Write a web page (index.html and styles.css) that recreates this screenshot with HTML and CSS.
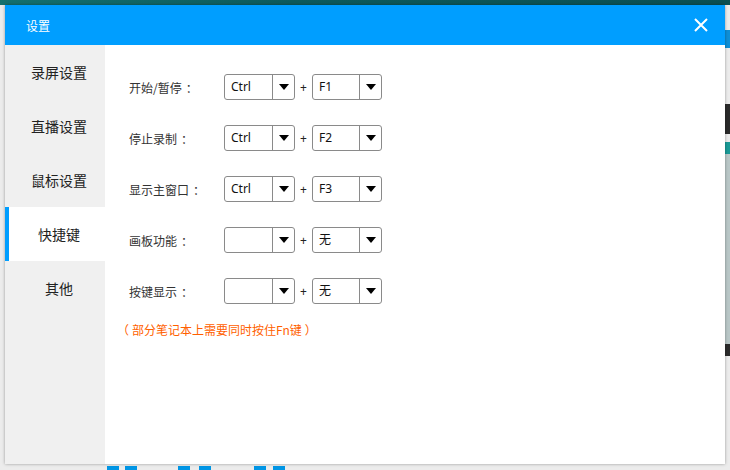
FILE: index.html
```html
<!DOCTYPE html>
<html lang="zh">
<head>
<meta charset="utf-8">
<title>设置</title>
<link rel="stylesheet" href="styles.css">
</head>
<body>
<div class="desk">
  <div class="dialog">
    <div class="header">
      <span class="title">设置</span>
      <svg class="close" width="14" height="14" viewBox="0 0 14 14"><path d="M1 1L13 13M13 1L1 13" stroke="#fff" stroke-width="2" fill="none"/></svg>
    </div>
    <div class="main">
      <ul class="menu">
        <li class="item">录屏设置</li>
        <li class="item">直播设置</li>
        <li class="item">鼠标设置</li>
        <li class="item active">快捷键</li>
        <li class="item">其他</li>
      </ul>
      <div class="content">
        <div class="row">
          <span class="label">开始/暂停<span class="colon">：</span></span>
          <div class="select"><span class="val">Ctrl</span><span class="btn"><i class="arrow"></i></span></div>
          <span class="plus">+</span>
          <div class="select"><span class="val">F1</span><span class="btn"><i class="arrow"></i></span></div>
        </div>
        <div class="row">
          <span class="label">停止录制<span class="colon">：</span></span>
          <div class="select"><span class="val">Ctrl</span><span class="btn"><i class="arrow"></i></span></div>
          <span class="plus">+</span>
          <div class="select"><span class="val">F2</span><span class="btn"><i class="arrow"></i></span></div>
        </div>
        <div class="row">
          <span class="label">显示主窗口<span class="colon">：</span></span>
          <div class="select"><span class="val">Ctrl</span><span class="btn"><i class="arrow"></i></span></div>
          <span class="plus">+</span>
          <div class="select"><span class="val">F3</span><span class="btn"><i class="arrow"></i></span></div>
        </div>
        <div class="row">
          <span class="label">画板功能<span class="colon">：</span></span>
          <div class="select"><span class="val"></span><span class="btn"><i class="arrow"></i></span></div>
          <span class="plus">+</span>
          <div class="select"><span class="val">无</span><span class="btn"><i class="arrow"></i></span></div>
        </div>
        <div class="row">
          <span class="label">按键显示<span class="colon">：</span></span>
          <div class="select"><span class="val"></span><span class="btn"><i class="arrow"></i></span></div>
          <span class="plus">+</span>
          <div class="select"><span class="val">无</span><span class="btn"><i class="arrow"></i></span></div>
        </div>
        <p class="note"><span class="pl">（</span>部分笔记本上需要同时按住Fn键<span class="pr">）</span></p>
      </div>
    </div>
  </div>
</div>
</body>
</html>
```

FILE: styles.css
```css
* { box-sizing: border-box; }
html, body { margin: 0; padding: 0; }
body {
  width: 730px;
  height: 470px;
  overflow: hidden;
  font-family: "Noto Sans", "Noto Sans CJK SC", sans-serif;
  background:
    linear-gradient(90deg, #14706e, #0d5a5c 40%, #0b4f52) 0 0 / 730px 5px no-repeat,
    linear-gradient(#0096e6, #0096e6) 107px 466px / 12px 4px no-repeat,
    linear-gradient(#0096e6, #0096e6) 125px 466px / 12px 4px no-repeat,
    linear-gradient(#0096e6, #0096e6) 178px 466px / 12px 4px no-repeat,
    linear-gradient(#0096e6, #0096e6) 199px 466px / 12px 4px no-repeat,
    linear-gradient(#0096e6, #0096e6) 254px 466px / 12px 4px no-repeat,
    linear-gradient(#0096e6, #0096e6) 273px 466px / 12px 4px no-repeat,
    linear-gradient(#0f8fd6, #0f8fd6) 725px 30px / 5px 18px no-repeat,
    linear-gradient(#2b2b2b, #2b2b2b) 725px 104px / 5px 30px no-repeat,
    linear-gradient(#1a9a96, #1a9a96) 725px 142px / 5px 12px no-repeat,
    linear-gradient(#b9c7c7, #b9c7c7) 725px 154px / 5px 190px no-repeat,
    linear-gradient(#2b2b2b, #2b2b2b) 725px 326px / 5px 30px no-repeat,
    #ececec;
}
.desk { padding: 5px 5px 6px 5px; height: 470px; }
.dialog {
  width: 720px;
  height: 459px;
  background: #fff;
  box-shadow: 0 0 3px rgba(0,0,0,0.35);
  display: flex;
  flex-direction: column;
}
.header {
  height: 40px;
  background: #009eff;
  display: flex;
  align-items: center;
  justify-content: space-between;
  padding: 0 17px 0 21px;
  flex: none;
}
.title {
  color: #fff;
  font-size: 12px;
  font-family: "Noto Sans CJK SC", sans-serif;
}
.close { display: block; }
.main { flex: 1; display: flex; }
.menu {
  list-style: none;
  margin: 0;
  padding: 0;
  width: 100px;
  background: #f0f0f0;
  flex: none;
}
.item {
  height: 54px;
  display: flex;
  align-items: center;
  justify-content: center;
  padding-left: 8px;
  font-size: 14px;
  color: #222;
  font-family: "Noto Sans CJK SC", sans-serif;
}
.item.active {
  background: #fff;
  border-left: 4px solid #009eff;
  padding-left: 4px;
}
.content {
  flex: 1;
  padding: 29px 0 0 24px;
}
.row {
  display: flex;
  align-items: center;
  height: 26px;
  margin-bottom: 25px;
}
.label {
  width: 95px;
  font-size: 12px;
  color: #333;
  font-family: "Noto Sans CJK SC", sans-serif;
}
.colon { margin-left: 4px; }
.select {
  width: 71px;
  height: 26px;
  border: 1px solid #8a8a8a;
  border-radius: 3px;
  display: flex;
  background: #fff;
}
.select + .plus + .select { width: 70px; }
.val {
  flex: 1;
  border-right: 1px solid #8a8a8a;
  font-size: 12px;
  line-height: 24px;
  padding-left: 6px;
  color: #111;
  font-family: "Noto Sans", "Noto Sans CJK SC", sans-serif;
}
.btn {
  width: 21px;
  display: flex;
  align-items: center;
  justify-content: center;
}
.arrow {
  width: 0;
  height: 0;
  border-left: 5px solid transparent;
  border-right: 5px solid transparent;
  border-top: 6px solid #000;
}
.plus {
  width: 17px;
  text-align: center;
  font-size: 12px;
  color: #222;
  font-family: "Noto Sans", sans-serif;
}
.note {
  margin: -8px 0 0 -12px;
  font-size: 12px;
  color: #ff5f00;
  font-family: "Noto Sans CJK SC", sans-serif;
}
.note .pl { margin-right: 3px; }
.note .pr { margin-left: 3px; }
```
